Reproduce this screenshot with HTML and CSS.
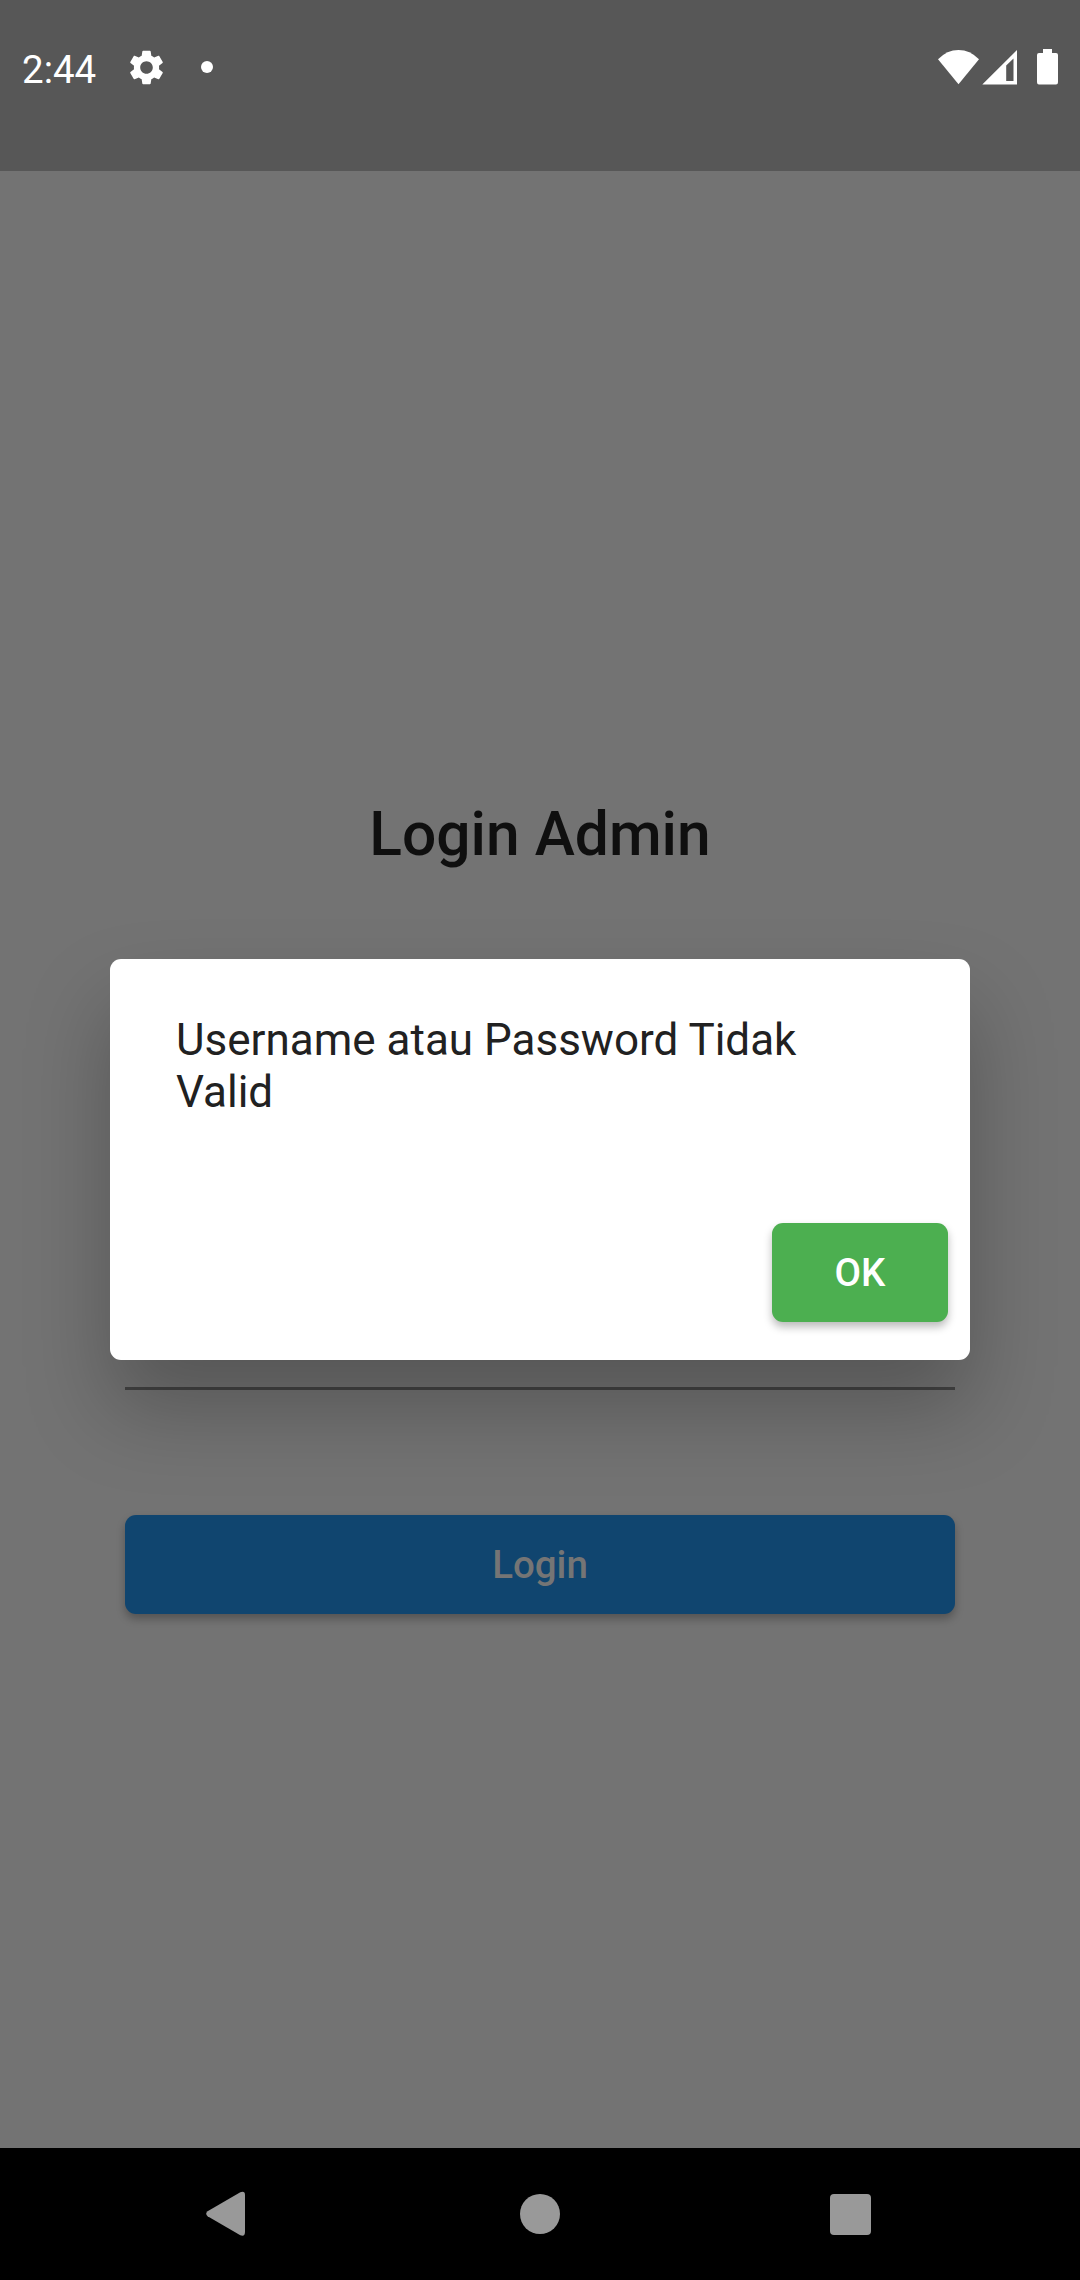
FILE: index.html
```html
<!DOCTYPE html>
<html lang="id">
<head>
<meta charset="utf-8">
<title>Login Admin</title>
<link rel="stylesheet" href="styles.css">
</head>
<body>
<div class="screen">
  <header class="status-bar">
    <span class="clock">2:44</span>
    <svg class="gear" viewBox="2 2 20 20"><path fill="#fff" d="M19.14 12.94c.04-.3.06-.61.06-.94 0-.32-.02-.64-.07-.94l2.03-1.58c.18-.14.23-.41.12-.61l-1.92-3.32c-.12-.22-.37-.29-.59-.22l-2.39.96c-.5-.38-1.03-.7-1.62-.94l-.36-2.54c-.04-.24-.24-.41-.48-.41h-3.84c-.24 0-.43.17-.47.41l-.36 2.54c-.59.24-1.13.57-1.62.94l-2.39-.96c-.22-.08-.47 0-.59.22L2.74 8.87c-.12.21-.08.47.12.61l2.03 1.58c-.05.3-.09.63-.09.94s.02.64.07.94l-2.03 1.58c-.18.14-.23.41-.12.61l1.92 3.32c.12.22.37.29.59.22l2.39-.96c.5.38 1.03.7 1.62.94l.36 2.54c.05.24.24.41.48.41h3.84c.24 0 .44-.17.47-.41l.36-2.54c.59-.24 1.13-.56 1.62-.94l2.39.96c.22.08.47 0 .59-.22l1.92-3.32c.12-.22.07-.47-.12-.61l-2.01-1.58zM12 15.6c-1.98 0-3.6-1.62-3.6-3.6s1.62-3.6 3.6-3.6 3.6 1.62 3.6 3.6-1.62 3.6-3.6 3.6z"/></svg>
    <span class="dot"></span>
    <svg class="signals" viewBox="0 0 121 36"><g fill="#fff"><path d="M0 10.3Q9 1 20.5 1T41 10.3L20.5 35.2Z"/><path fill-rule="evenodd" d="M44.3 35.5L79 1V35.5ZM68.2 16.5V32H75.5V9.5Z"/><path d="M105 0H114V4H118Q120 4 120 6V33.2Q120 35.5 118 35.5H101Q99 35.5 99 33.2V6Q99 4 101 4H105Z"/></g></svg>
  </header>
  <main class="page">
    <h1 class="title">Login Admin</h1>
    <div class="underline"></div>
    <button class="button login">Login</button>
  </main>
  <nav class="nav-bar">
    <svg class="back" viewBox="0 0 40 46"><path fill="#999" d="M1.6 20.2L34.3 1.2Q39 -.5 39 4V41Q39 46 34.3 44.2L1.6 25.2Q-1.2 22.7 1.6 20.2Z"/></svg>
    <span class="home"></span>
    <span class="recent"></span>
  </nav>
  <section class="dialog" role="dialog">
    <p class="message">Username atau Password Tidak Valid</p>
    <button class="button ok">OK</button>
  </section>
</div>
</body>
</html>
```
FILE: styles.css
```css
* { box-sizing: border-box; }
body { margin: 0; font-family: Roboto, sans-serif; }
.screen {
  position: relative;
  display: flex;
  flex-direction: column;
  width: 1080px;
  height: 2280px;
  background: #737373;
}
.status-bar {
  display: flex;
  align-items: flex-start;
  height: 171px;
  padding: 0 22px;
  background: #575757;
  color: #fff;
}
.clock { width: 107px; margin-top: 47px; font-size: 38.5px; line-height: 46px; }
.gear { width: 35px; height: 35px; margin-top: 50px; }
.dot { width: 12px; height: 12px; margin: 61px 0 0 37px; border-radius: 50%; background: #fff; }
.signals { width: 121px; height: 36px; margin: 49px -1px 0 auto; }
.page {
  flex: 1;
  display: flex;
  flex-direction: column;
  padding: 628px 125px 0;
}
.title {
  margin: 0;
  text-align: center;
  color: #0f0f0f;
  font-size: 60.5px;
  font-weight: 500;
  line-height: 72px;
}
.underline { height: 3px; margin-top: 516px; background: #434343; }
.button {
  height: 99px;
  padding: 0;
  border: 0;
  border-radius: 11px;
  font: 500 38.5px/99px Roboto, sans-serif;
  box-shadow: 0 5px 8px rgba(0, 0, 0, .27);
}
.login { margin-top: 125px; background: #10456f; color: #757575; }
.nav-bar { display: flex; align-items: flex-start; height: 132px; padding-left: 206px; background: #000; }
.back { width: 40px; height: 46px; margin-top: 43px; }
.home { width: 40px; height: 40px; margin: 46px 0 0 274px; border-radius: 50%; background: #999; }
.recent { width: 41px; height: 41px; margin: 46px 0 0 270px; border-radius: 4px; background: #999; }
.dialog {
  position: absolute;
  left: 110px;
  top: 959px;
  width: 860px;
  height: 401px;
  display: flex;
  flex-direction: column;
  padding: 55px 22px 0 66px;
  border-radius: 11px;
  background: #fff;
  box-shadow: 0 48px 84px rgba(0, 0, 0, .25);
}
.message { width: 728px; margin: 0 0 105px; color: #212121; font-size: 44px; line-height: 52px; }
.ok { align-self: flex-end; width: 176px; background: #4caf50; color: #fff; }
```
